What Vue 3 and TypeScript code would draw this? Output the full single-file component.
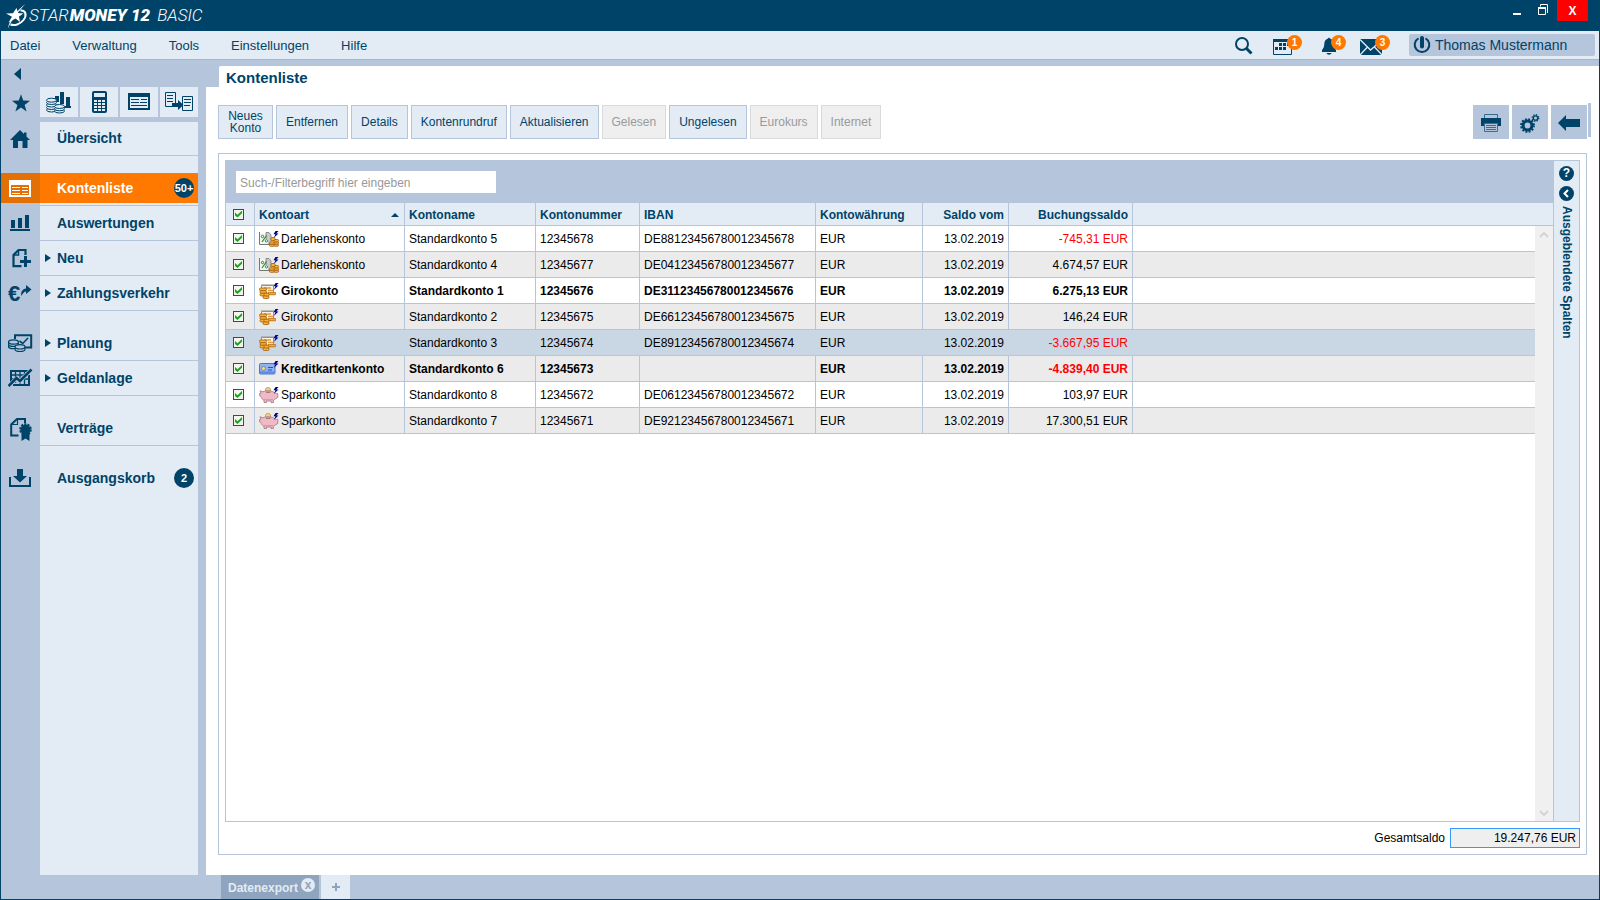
<script setup lang="ts">
import { computed, ref } from 'vue'

interface NavItem {
  id: string
  label: string
  gap?: boolean
  expandable?: boolean
  active?: boolean
  badge?: string
  last?: boolean
}

interface Account {
  type: string
  icon: 'loan' | 'giro' | 'card' | 'savings'
  name: string
  number: string
  iban: string
  currency: string
  date: string
  cents: number
  unread?: boolean
  selected?: boolean
  checked: boolean
}

const menus = ['Datei', 'Verwaltung', 'Tools', 'Einstellungen', 'Hilfe']

const navItems: NavItem[] = [
  { id: 'home', label: 'Übersicht' },
  { id: 'list', label: 'Kontenliste', gap: true, active: true, badge: '50+' },
  { id: 'chart', label: 'Auswertungen' },
  { id: 'new', label: 'Neu', expandable: true },
  { id: 'euro', label: 'Zahlungsverkehr', expandable: true },
  { id: 'plan', label: 'Planung', gap: true, expandable: true },
  { id: 'invest', label: 'Geldanlage', expandable: true },
  { id: 'contract', label: 'Verträge', gap: true },
  { id: 'outbox', label: 'Ausgangskorb', gap: true, badge: '2', last: true },
]

const actions = [
  { label: 'Neues Konto', wrap: true, disabled: false },
  { label: 'Entfernen', wrap: false, disabled: false },
  { label: 'Details', wrap: false, disabled: false },
  { label: 'Kontenrundruf', wrap: false, disabled: false },
  { label: 'Aktualisieren', wrap: false, disabled: false },
  { label: 'Gelesen', wrap: false, disabled: true },
  { label: 'Ungelesen', wrap: false, disabled: false },
  { label: 'Eurokurs', wrap: false, disabled: true },
  { label: 'Internet', wrap: false, disabled: true },
]

const accounts = ref<Account[]>([
  { type: 'Darlehenskonto', icon: 'loan', name: 'Standardkonto 5', number: '12345678', iban: 'DE88123456780012345678', currency: 'EUR', date: '13.02.2019', cents: -74531, checked: true },
  { type: 'Darlehenskonto', icon: 'loan', name: 'Standardkonto 4', number: '12345677', iban: 'DE04123456780012345677', currency: 'EUR', date: '13.02.2019', cents: 467457, checked: true },
  { type: 'Girokonto', icon: 'giro', name: 'Standardkonto 1', number: '12345676', iban: 'DE31123456780012345676', currency: 'EUR', date: '13.02.2019', cents: 627513, unread: true, checked: true },
  { type: 'Girokonto', icon: 'giro', name: 'Standardkonto 2', number: '12345675', iban: 'DE66123456780012345675', currency: 'EUR', date: '13.02.2019', cents: 14624, checked: true },
  { type: 'Girokonto', icon: 'giro', name: 'Standardkonto 3', number: '12345674', iban: 'DE89123456780012345674', currency: 'EUR', date: '13.02.2019', cents: -366795, selected: true, checked: true },
  { type: 'Kreditkartenkonto', icon: 'card', name: 'Standardkonto 6', number: '12345673', iban: '', currency: 'EUR', date: '13.02.2019', cents: -483940, unread: true, checked: true },
  { type: 'Sparkonto', icon: 'savings', name: 'Standardkonto 8', number: '12345672', iban: 'DE06123456780012345672', currency: 'EUR', date: '13.02.2019', cents: 10397, checked: true },
  { type: 'Sparkonto', icon: 'savings', name: 'Standardkonto 7', number: '12345671', iban: 'DE92123456780012345671', currency: 'EUR', date: '13.02.2019', cents: 1730051, checked: true },
])

const filter = ref('')
const total = ref('19.247,76 EUR')

const visible = computed(() => {
  const term = filter.value.trim().toLowerCase()
  return accounts.value.filter((a) => `${a.type} ${a.name} ${a.number} ${a.iban}`.toLowerCase().includes(term))
})

const allChecked = computed({
  get: () => accounts.value.every((a) => a.checked),
  set: (value: boolean) => accounts.value.forEach((a) => (a.checked = value)),
})

function money(cents: number): string {
  const abs = Math.abs(cents)
  const whole = String(Math.floor(abs / 100)).replace(/\B(?=(\d{3})+$)/g, '.')
  return `${cents < 0 ? '-' : ''}${whole},${String(abs % 100).padStart(2, '0')} EUR`
}
</script>

<template>
  <div class="window">
    <header class="titlebar">
      <svg class="mark" width="24" height="26" viewBox="0 0 24 26" aria-hidden="true">
        <path d="M1 10.500 8 10.200 11.500 5 13 10 18.500 10.500 14 13.500 15 19 10.500 15.500 3.500 19.500 7 13.700Z" fill="#fff" />
        <path d="M3 25.500C4 17 12 7 20.500 1 13.500 8.500 7 16 3 25.500Z" fill="#fff" />
        <path d="M15.500 7.500C21 7 22 12.500 18.500 17 15 21.500 9.500 22.800 5.500 21.500" fill="none" stroke="#fff" stroke-width="2" />
      </svg>
      <h1 class="brand"><span class="thin">STAR</span><b>MONEY 12</b> <span class="thin">BASIC</span></h1>
      <div class="controls">
        <button type="button" class="ctl" aria-label="Minimieren">
          <svg width="14" height="14" viewBox="0 0 14 14"><path d="M3 9H11V11H3Z" fill="#fff" /></svg>
        </button>
        <button type="button" class="ctl" aria-label="Wiederherstellen">
          <svg width="14" height="14" viewBox="0 0 14 14"><path d="M4.500 2.500V.5H11.500V9" fill="none" stroke="#fff" /><path d="M2.500 3.500H9.500V10.500H2.500Z" fill="none" stroke="#fff" /><path d="M2 3H10V5H2Z" fill="#fff" /></svg>
        </button>
        <button type="button" class="close" aria-label="Schließen">X</button>
      </div>
    </header>

    <div class="menubar">
      <nav class="menus" aria-label="Hauptmenü">
        <button v-for="m in menus" :key="m" type="button">{{ m }}</button>
      </nav>
      <div class="status">
        <button type="button" class="status-btn" aria-label="Suche">
          <svg width="26" height="20" viewBox="0 0 26 20"><circle cx="10" cy="9" r="6" fill="none" stroke="#004368" stroke-width="2" /><path d="M14.500 13.500 19.500 18.500" stroke="#004368" stroke-width="3" /></svg>
        </button>
        <button type="button" class="status-btn" aria-label="Termine">
          <svg width="26" height="20" viewBox="0 0 26 20"><path d="M1 4H20V7H1Z" fill="#004368" /><path d="M1.500 4V19.500H19.500V4" fill="none" stroke="#004368" /><path d="M7 8h3v3H7zM11 8h3v3h-3zM15 8h3v3h-3zM3 12h3v3H3zM7 12h3v3H7zM11 12h3v3h-3z" fill="#004368" /></svg>
          <span class="count">1</span>
        </button>
        <button type="button" class="status-btn" aria-label="Mitteilungen">
          <svg width="26" height="20" viewBox="0 0 26 20"><path d="M7 3.500C7 2.500 9 2.500 9 3.500 12 4.500 12.500 6.500 12.700 9 12.900 12 13.500 13.500 15 15V17H1V15C2.500 13.500 3.100 12 3.300 9 3.500 6.500 4 4.500 7 3.500Z" fill="#004368" /><path d="M5.500 18H10.500C10 20.300 6 20.300 5.500 18Z" fill="#004368" /></svg>
          <span class="count">4</span>
        </button>
        <button type="button" class="status-btn" aria-label="Nachrichten">
          <svg width="26" height="20" viewBox="0 0 26 20"><path d="M0 4H22V20H0Z" fill="#004368" /><path d="M0 4.500 7.500 12 10.500 15 14 12 22 4.500M0 20 7.500 12M22 20 14.500 12" fill="none" stroke="#e3ebf4" stroke-width="1.300" /></svg>
          <span class="count">3</span>
        </button>
        <button type="button" class="user">
          <svg width="18" height="18" viewBox="0 0 18 18" aria-hidden="true"><path d="M5.500 2.300A7.300 7.300 0 1 0 12.500 2.300" fill="none" stroke="#004368" stroke-width="2" /><path d="M9 2V10.500" stroke="#004368" stroke-width="4" stroke-linecap="round" /></svg>
          <span>Thomas Mustermann</span>
        </button>
      </div>
    </div>

    <div class="workspace">
      <aside class="sidebar">
        <div class="side-top">
          <div class="rail">
            <button type="button" class="collapse" aria-label="Navigation einklappen">
              <svg width="8" height="12" viewBox="0 0 8 12"><path d="M7 0V12L0 6Z" fill="#004368" /></svg>
            </button>
            <button type="button" class="fav" aria-label="Favoriten">
              <svg width="26" height="26" viewBox="0 0 26 26"><path d="M13 4.200 15.200 10.600 22 10.700 16.600 14.900 18.600 21.500 13 17.500 7.400 21.500 9.400 14.900 4 10.700 10.800 10.600Z" fill="#004368" /></svg>
            </button>
          </div>
          <div class="tools">
            <button type="button" aria-label="Finanzübersicht">
              <svg width="38" height="30" viewBox="0 0 38 30">
                <g fill="#004368"><path d="M15 9h4v6h-4zM20 5h4v12h-4zM26 10h4v9h-4zM23 19h8v2h-8z" /></g>
                <g fill="#e3ebf4" stroke="#004368" stroke-width="1">
                  <ellipse cx="11.500" cy="23" rx="5" ry="2" /><ellipse cx="11.500" cy="20.500" rx="5" ry="2" /><ellipse cx="11.500" cy="18" rx="5" ry="2" /><ellipse cx="11.500" cy="15.500" rx="5" ry="2" /><ellipse cx="11.500" cy="13.200" rx="5" ry="2" />
                  <ellipse cx="19.500" cy="24" rx="5" ry="2" /><ellipse cx="19.500" cy="21.800" rx="5" ry="2" /><ellipse cx="19.500" cy="19.500" rx="5" ry="2" />
                </g>
              </svg>
            </button>
            <button type="button" aria-label="Taschenrechner">
              <svg width="38" height="30" viewBox="0 0 38 30"><rect x="12" y="4" width="15" height="22" rx="2" fill="#004368" /><path d="M14 6h11v4H14z" fill="#e3ebf4" /><path d="M14 13h3v2h-3zM18 13h3v2h-3zM22 13h3v2h-3zM14 16h3v2h-3zM18 16h3v2h-3zM22 16h3v2h-3zM14 19h3v2h-3zM18 19h3v2h-3zM22 19h3v2h-3zM14 22h3v2h-3zM18 22h3v2h-3zM22 22h3v2h-3z" fill="#e3ebf4" /></svg>
            </button>
            <button type="button" aria-label="Umsatzliste">
              <svg width="38" height="30" viewBox="0 0 38 30"><path d="M8 6h22v17H8z" fill="#004368" /><path d="M10 10h18v11H10z" fill="#e3ebf4" /><path d="M11 12.500h8M21 12.500h6M11 15.500h8M20 15.500h7M11 18.500h16" stroke="#004368" /></svg>
            </button>
            <button type="button" aria-label="Umbuchung">
              <svg width="38" height="30" viewBox="0 0 38 30"><g fill="none" stroke="#004368"><path d="M5.500 5.500h10v14h-10zM22.500 9.500h10v14h-10z" /><path d="M7 8.500h6M7 11.500h6M7 14.500h6M24 12.500h7M24 15.500h7M24 18.500h6" /></g><path d="M12 16h6v-3l5.500 5-5.500 5v-3h-6z" fill="#004368" /></svg>
            </button>
          </div>
        </div>

        <ul class="nav">
          <li v-for="item in navItems" :key="item.id" :class="{ gap: item.gap }">
            <a href="#" :class="{ active: item.active, last: item.last }">
              <span class="nav-icon">
                <svg width="26" height="26" viewBox="0 0 26 26" aria-hidden="true">
                  <path v-if="item.id === 'home'" d="M12 4 2 14H5V22H10V15H14.500V22H19.500V14H22L18.500 10.500V6.500H16V8Z" fill="#004368" />
                  <g v-else-if="item.id === 'list'"><path d="M1 5H23V22H1ZM3 10V20H21V10Z" fill="#fff" fill-rule="evenodd" /><path d="M4 12.500h8M14 12.500h6M4 15.500h8M14 15.500h6M4 18.500h8M14 18.500h6" stroke="#fff" /></g>
                  <path v-else-if="item.id === 'chart'" d="M3 10h4v8H3zM10 8h4v10h-4zM17 5h4v13h-4zM2 19h20v2H2z" fill="#004368" />
                  <g v-else-if="item.id === 'new'" fill="none" stroke="#004368"><path d="M17.500 10V5H10.500L5.500 10V21.200H13.500" stroke-width="2.200" /><path d="M10.500 5V10H5.500" stroke-width="1.500" /><path d="M17.500 11V22M12 16.500H23" stroke-width="3" /></g>
                  <g v-else-if="item.id === 'euro'" fill="#004368"><text x="0" y="21" class="euro">€</text><path d="M13 16C13 10.500 15 9 18 8.500V5L23.500 9.500 18 14V11.500C16 11.500 15.500 13 13 16Z" /></g>
                  <g v-else-if="item.id === 'plan'" stroke="#004368" fill="none">
                    <path d="M7 9V5.200H23.200V17.500H17" stroke-width="2" /><path d="M11.500 11 14.700 13.500 20 8" stroke-width="1.600" />
                    <g fill="#b5c5db" stroke-width="1.200"><ellipse cx="5.500" cy="16.500" rx="5" ry="2.200" /><ellipse cx="5.500" cy="14.200" rx="5" ry="2.200" /><ellipse cx="5.500" cy="12" rx="5" ry="2.200" /><ellipse cx="12" cy="19.300" rx="5" ry="2.200" /><ellipse cx="12" cy="16.800" rx="5" ry="2.200" /></g>
                  </g>
                  <g v-else-if="item.id === 'invest'" stroke="#004368" fill="none"><path d="M3 18V6H20M21 10V20H5" stroke-width="2" /><path d="M3 10h16M3 14h18M7.500 6v12M12 6v14M16.500 6v14" stroke-width="1.300" /><path d="M1 20.500 9 13 12 16 23.500 4.500" stroke="#b5c5db" stroke-width="4" /><path d="M.5 21 8.500 13 12 16 23.500 4.500" stroke-width="2.600" /></g>
                  <g v-else-if="item.id === 'contract'"><path d="M17 8V4H9L3.200 9.500V20.500H10.500" fill="none" stroke="#004368" stroke-width="2" /><path d="M9.500 4V9.500H3" fill="none" stroke="#004368" stroke-width="1.200" /><circle cx="17.500" cy="14.500" r="5" fill="#004368" /><circle cx="17.500" cy="14.500" r="5.300" fill="none" stroke="#004368" stroke-width="2" stroke-dasharray="2.100 1.200" /><path d="M13.500 17V26L17.500 23.500 21.500 26V17Z" fill="#004368" /></g>
                  <g v-else><path d="M9 4H15V11H19L12 17.500 5 11H9Z" fill="#004368" /><path d="M2 12V21H22V12" fill="none" stroke="#004368" stroke-width="2" /></g>
                </svg>
              </span>
              <span class="nav-label">
                <i class="tri" :class="{ on: item.expandable }"></i>
                {{ item.label }}
                <span v-if="item.badge" class="badge">{{ item.badge }}</span>
              </span>
            </a>
          </li>
        </ul>
      </aside>

      <main class="content">
        <h2 class="page-title">Kontenliste</h2>
        <div class="page">
          <div class="toolbar">
            <button v-for="a in actions" :key="a.label" type="button" class="action" :class="{ wrap: a.wrap }" :disabled="a.disabled">{{ a.label }}</button>
            <div class="page-tools">
              <button type="button" aria-label="Drucken">
                <svg width="36" height="34" viewBox="0 0 36 34"><path d="M11.500 14V9.500H24.500V14" fill="none" stroke="#004368" stroke-opacity=".7" /><path d="M8 13H28V21H8Z" fill="#004368" /><path d="M11.500 18.500H24.500V26.500H11.500Z" fill="#b5c5db" stroke="#3c6f8f" /><path d="M13 20.500H23M13 22.500H23M13 24.500H23" stroke="#3c6f8f" /></svg>
              </button>
              <button type="button" aria-label="Einstellungen der Liste">
                <svg width="36" height="34" viewBox="0 0 36 34" fill="none" stroke="#004368"><circle cx="15.500" cy="20.500" r="4.400" stroke-width="3" /><circle cx="15.500" cy="20.500" r="6.400" stroke-width="2" stroke-dasharray="1.900 1.450" /><circle cx="23.500" cy="13" r="2.200" stroke-width="1.300" /><circle cx="23.500" cy="13" r="3.200" stroke-width="1.400" stroke-dasharray="1.300 1.213" /></svg>
              </button>
              <button type="button" aria-label="Zurück">
                <svg width="36" height="34" viewBox="0 0 36 34"><path d="M7 18 15 10V14H29V22H15V26Z" fill="#004368" /></svg>
              </button>
            </div>
          </div>

          <section class="frame">
            <div class="grid">
              <div class="grid-main">
                <div class="filter">
                  <input v-model="filter" type="text" aria-label="Filter" placeholder="Such-/Filterbegriff hier eingeben" />
                </div>
                <div class="rows">
                  <table>
                    <colgroup>
                      <col class="c-check" /><col class="c-type" /><col class="c-name" /><col class="c-number" /><col class="c-iban" /><col class="c-currency" /><col class="c-date" /><col class="c-amount" /><col />
                    </colgroup>
                    <thead>
                      <tr>
                        <th class="check"><input v-model="allChecked" type="checkbox" aria-label="Alle auswählen" /></th>
                        <th aria-sort="ascending"><span class="sorted">Kontoart<i></i></span></th>
                        <th>Kontoname</th>
                        <th>Kontonummer</th>
                        <th>IBAN</th>
                        <th>Kontowährung</th>
                        <th class="right">Saldo vom</th>
                        <th class="right">Buchungssaldo</th>
                        <td></td>
                      </tr>
                    </thead>
                    <tbody>
                      <tr v-for="a in visible" :key="a.number" :class="{ unread: a.unread, selected: a.selected }">
                        <td class="check"><input v-model="a.checked" type="checkbox" :aria-label="a.name" /></td>
                        <td>
                          <span class="type">
                            <svg width="20" height="16" viewBox="0 0 20 16" aria-hidden="true">
                              <g v-if="a.icon === 'loan'">
                                <path d="M.5 1V13.500H13" fill="none" stroke="#777" /><path d="M7 1.500H10L12 4V13H7Z" fill="#c9c9c9" stroke="#777" stroke-width=".8" /><path d="M1 2H6V8H9V13H1Z" fill="#f4f6f2" />
                                <path d="M7.500 4.500 3 11" stroke="#2c8a3a" stroke-width="1.200" /><circle cx="3.500" cy="5.500" r="1.200" fill="none" stroke="#2c8a3a" /><circle cx="7.500" cy="9.800" r="1.200" fill="none" stroke="#2c8a3a" />
                                <g fill="#f7b63a" stroke="#a35a08" stroke-width=".8"><rect x="10.500" y="13" width="5" height="2.300" rx="1" /><rect x="10.500" y="10.800" width="5" height="2.300" rx="1" /><rect x="15" y="13" width="4.500" height="2.300" rx="1" /><rect x="15" y="10.800" width="4.500" height="2.300" rx="1" /><rect x="15" y="8.500" width="4.500" height="2.300" rx="1" /><rect x="12" y="6.500" width="4" height="3" rx="1" /></g>
                              </g>
                              <g v-else-if="a.icon === 'giro'">
                                <path d="M2.500 2.500H14.500V11.500H2.500Z" fill="#fdf3e2" stroke="#c9862e" /><path d="M2 1.800H15" stroke="#999" stroke-width=".8" /><path d="M5 5H12M9 7.500H14" stroke="#e59a35" stroke-width="1.300" /><path d="M9 9.500H16.500V11.800H9Z" fill="#f5a93c" stroke="#b5690e" stroke-width=".7" />
                                <g fill="#f7b63a" stroke="#a35a08" stroke-width=".8"><rect x=".5" y="5" width="7" height="2.700" rx="1.200" /><rect x="1" y="7.700" width="6.500" height="2.600" rx="1.200" /><rect x="1" y="10.300" width="6.500" height="2.600" rx="1.200" /><rect x="4" y="12.800" width="6" height="2.700" rx="1.200" /><rect x="5" y="10.300" width="5" height="2.600" rx="1.200" /></g>
                              </g>
                              <g v-else-if="a.icon === 'card'">
                                <rect x=".5" y="2.500" width="15.500" height="10.500" rx="1" fill="#8fb2f5" stroke="#4a74d0" /><path d="M1 10.500H15.500V12.500H1Z" fill="#5b86e6" /><circle cx="4.500" cy="7.500" r="2" fill="#f1dc8f" stroke="#6f7a50" stroke-width=".7" /><path d="M9 6.500H14M9 9H13" stroke="#2a4fb0" />
                              </g>
                              <g v-else>
                                <circle cx="9" cy="3" r="2.600" fill="#f2d27a" stroke="#b39034" stroke-width=".7" /><path d="M1 3.800 4 4.800C6 3.300 12 3.300 14.500 5 16 6 16.500 6.500 18.800 6.500V10.500L16 12 14.500 13.500V15.500H12V14H7.500V15.500H5V13.300C3 12.300 2.300 11 2 9.600L.6 8.800V6.500L2 6.200Z" fill="#efb9c5" stroke="#a27682" stroke-width=".8" /><path d="M5 12.800H14" stroke="#cf8c9d" /><path d="M7 5.200H11.500" stroke="#8a5f68" />
                              </g>
                              <path d="M16.500 0 14.500 3.200H16.500L14.800 7 19.500 2.500H17.300L19.500 0Z" fill="#000080" />
                            </svg>
                            {{ a.type }}
                          </span>
                        </td>
                        <td>{{ a.name }}</td>
                        <td>{{ a.number }}</td>
                        <td>{{ a.iban }}</td>
                        <td>{{ a.currency }}</td>
                        <td class="right">{{ a.date }}</td>
                        <td class="right" :class="{ negative: a.cents < 0 }">{{ money(a.cents) }}</td>
                        <td></td>
                      </tr>
                    </tbody>
                  </table>
                  <div class="scrollbar" aria-hidden="true">
                    <svg width="10" height="8" viewBox="0 0 10 8"><path d="M1 6 5 2 9 6" fill="none" stroke="#d4d4d4" stroke-width="2" /></svg>
                    <svg width="10" height="8" viewBox="0 0 10 8"><path d="M1 2 5 6 9 2" fill="none" stroke="#d4d4d4" stroke-width="2" /></svg>
                  </div>
                </div>
              </div>
              <div class="hidden-cols">
                <button type="button" aria-label="Hilfe" class="round">?</button>
                <button type="button" aria-label="Spalten einblenden" class="round">
                  <svg width="15" height="15" viewBox="0 0 15 15"><path d="M9 4 5.500 7.500 9 11" fill="none" stroke="#fff" stroke-width="2" /></svg>
                </button>
                <span class="vertical">Ausgeblendete Spalten</span>
              </div>
            </div>
            <div class="total">
              <label for="total">Gesamtsaldo</label>
              <input id="total" v-model="total" type="text" readonly />
            </div>
          </section>
        </div>
      </main>
    </div>

    <footer class="tabs">
      <div class="tab">
        <a href="#">Datenexport</a>
        <button type="button" aria-label="Tab schließen">x</button>
      </div>
      <button type="button" class="add" aria-label="Neuer Tab">
        <svg width="10" height="10" viewBox="0 0 10 10"><path d="M5 1V9M1 5H9" stroke="#8ea3bd" stroke-width="2" /></svg>
      </button>
    </footer>
  </div>
</template>

<style>
html,
body {
  margin: 0;
  background: #b5c5db;
}
</style>

<style scoped>
* {
  box-sizing: border-box;
}
.window {
  display: flex;
  flex-direction: column;
  height: 100vh;
  border: 1px solid #004368;
  border-top: 0;
  background: #b5c5db;
  color: #004368;
  font-family: "Liberation Sans", Arial, sans-serif;
  font-size: 12px;
}
button {
  margin: 0;
  padding: 0;
  border: 0;
  background: none;
  color: inherit;
  font: inherit;
}
a {
  color: inherit;
  text-decoration: none;
}
svg {
  display: block;
}

/* Title bar */
.titlebar {
  display: flex;
  align-items: center;
  flex: none;
  height: 31px;
  padding-left: 4px;
  background: #004368;
  color: #fff;
}
.brand {
  margin: 0;
  font: italic 17px/31px Roboto, "Liberation Sans", sans-serif;
  white-space: pre;
}
.thin {
  font-weight: 300;
}
.brand b {
  margin: 0 3px 0 1px;
  font-weight: 900;
}
.controls {
  display: flex;
  align-self: flex-start;
  align-items: center;
  margin-left: auto;
  padding-right: 11px;
}
.ctl {
  margin-right: 12px;
}
.ctl + .ctl {
  margin-right: 7px;
}
.close {
  width: 31px;
  height: 21px;
  background: #f00;
  font-weight: bold;
}

/* Menu bar */
.menubar {
  display: flex;
  justify-content: space-between;
  align-items: center;
  flex: none;
  height: 29px;
  padding: 0 4px 0 9px;
  border-bottom: 1px solid #a5b8d0;
  background: #e3ebf4;
}
.menus {
  display: flex;
  gap: 32px;
  font-size: 13px;
}
.status {
  display: flex;
  align-items: center;
}
.status-btn {
  position: relative;
  width: 26px;
  margin-right: 14px;
}
.status-btn:nth-child(2),
.status-btn:nth-child(4) {
  margin-right: 23px;
}
.status-btn:nth-child(3) {
  margin-right: 13px;
}
.count {
  position: absolute;
  top: 0;
  left: 15px;
  width: 15px;
  height: 15px;
  border-radius: 50%;
  background: #ff7800;
  color: #fff;
  font: bold 10px/15px "Liberation Sans", Arial, sans-serif;
}
.status-btn:nth-child(3) .count {
  left: 10px;
}
.user {
  display: flex;
  align-items: center;
  gap: 4px;
  width: 186px;
  height: 22px;
  padding-left: 4px;
  border-radius: 2px;
  background: #b5c5db;
  font-size: 14px;
}

/* Sidebar */
.workspace {
  display: flex;
  flex: 1;
  min-height: 0;
}
.sidebar {
  display: flex;
  flex-direction: column;
  flex: none;
  width: 205px;
  padding-right: 8px;
}
.side-top {
  display: flex;
  height: 62px;
}
.rail {
  width: 39px;
}
.collapse,
.fav {
  display: block;
  height: 28px;
  padding-left: 13px;
}
.fav {
  padding-left: 7px;
  height: 30px;
}
.tools {
  display: flex;
  gap: 2px;
  align-items: flex-end;
  padding-bottom: 5px;
}
.tools button {
  background: #e3ebf4;
}
.nav {
  flex: 1;
  margin: 0;
  padding: 0;
  list-style: none;
  background: linear-gradient(to right, transparent 39px, #e3ebf4 39px);
  font-size: 14px;
  font-weight: bold;
}
.nav li.gap {
  padding-top: 15px;
}
.nav a {
  display: flex;
  height: 35px;
}
.nav li:first-child a {
  height: 34px;
}
.nav li:first-child .nav-icon,
.nav li:first-child .nav-label {
  padding-bottom: 1px;
}
.nav-icon {
  display: flex;
  align-items: center;
  width: 39px;
  padding: 0 0 1px 7px;
}
.nav-label {
  display: flex;
  align-items: center;
  flex: 1;
  padding: 0 4px 0 5px;
  border-bottom: 1px solid #b5c5db;
}
.nav a.last .nav-label {
  border-bottom-color: transparent;
}
.nav a.active {
  padding: 2px 0;
  border-bottom: 1px solid #b5c5db;
  color: #fff;
}
.nav a.active .nav-icon {
  padding-bottom: 0;
  background: #e37006;
}
.nav a.active .nav-label {
  border: 0;
  background: #ff7800;
}
.tri {
  width: 12px;
}
.tri.on::before {
  content: "";
  display: block;
  width: 6px;
  height: 8px;
  background: #004368;
  clip-path: polygon(0 0, 100% 50%, 0 100%);
}
.badge {
  width: 20px;
  height: 20px;
  margin-left: auto;
  border-radius: 50%;
  background: #004368;
  color: #fff;
  font-size: 11px;
  line-height: 20px;
  text-align: center;
  white-space: nowrap;
}
.euro {
  font: bold 22px "Liberation Sans", Arial, sans-serif;
}

/* Content */
.content {
  display: flex;
  flex-direction: column;
  flex: 1;
  min-width: 0;
  padding-top: 6px;
}
.page-title {
  margin: 0 0 0 13px;
  padding-left: 7px;
  background: #fff;
  font-size: 15px;
  line-height: 21px;
  height: 21px;
  padding-top: 1px;
  border-top-left-radius: 2px;
}
.page {
  display: flex;
  flex-direction: column;
  flex: 1;
  min-height: 0;
  padding: 18px 12px 20px;
  background: #fff;
}
.toolbar {
  position: relative;
  display: flex;
  gap: 3px;
}
.toolbar::after {
  content: "";
  position: absolute;
  top: -2px;
  right: -4px;
  width: 3px;
  height: 34px;
  background: #b5c5db;
}
.action {
  height: 34px;
  padding: 0 9px;
  border: 1px solid #b5c5db;
  background: #e3ebf4;
  line-height: 12px;
  white-space: nowrap;
}
.action.wrap {
  width: 55px;
  white-space: normal;
}
.action:disabled {
  border-color: #dadada;
  background: #efefef;
  color: #9a9a9a;
}
.page-tools {
  display: flex;
  gap: 3px;
  margin-left: auto;
}
.page-tools button {
  background: #b5c5db;
}
.frame {
  display: flex;
  flex-direction: column;
  flex: 1;
  min-height: 0;
  margin-top: 14px;
  padding: 6px;
  border: 1px solid #b5c5db;
}
.grid {
  display: flex;
  flex: 1;
  min-height: 0;
  border: 1px solid #b5c5db;
}
.grid-main {
  display: flex;
  flex-direction: column;
  flex: 1;
  min-width: 0;
}
.filter {
  flex: none;
  height: 42px;
  padding: 10px;
  background: #b5c5db;
}
.filter input {
  display: block;
  width: 260px;
  height: 22px;
  padding: 2px 4px 0;
  border: 0;
  font: 12px "Liberation Sans", Arial, sans-serif;
}
.filter input::placeholder {
  color: #999;
}
.rows {
  position: relative;
  flex: 1;
  min-height: 0;
  background: #fff;
}
table {
  width: 100%;
  table-layout: fixed;
  border-collapse: separate;
  border-spacing: 0;
}
.c-check { width: 29px; }
.c-type { width: 150px; }
.c-name { width: 131px; }
.c-number { width: 104px; }
.c-iban { width: 176px; }
.c-currency { width: 107px; }
.c-date { width: 86px; }
.c-amount { width: 124px; }
th,
td {
  height: 26px;
  padding: 0 4px;
  border-right: 1px solid #b5c5db;
  border-bottom: 1px solid #b5c5db;
  text-align: left;
  white-space: nowrap;
}
thead th,
thead td {
  height: 23px;
  padding-top: 2px;
  background: #e3ebf4;
}
tr > :last-child {
  border-right: 0;
}
tbody {
  color: #000;
}
tbody tr:nth-child(even) {
  background: #ebebeb;
}
tbody tr.unread {
  font-weight: bold;
}
tbody tr.selected {
  background: #c9d6e3;
}
tr.selected td {
  border-right-color: transparent;
}
.right {
  text-align: right;
}
.negative {
  color: #f00;
}
tr > .check {
  padding: 0 0 0 7px;
}
.check input {
  display: block;
  width: 11px;
  height: 11px;
  margin: 0;
  appearance: none;
  border: 1px solid #1c5180;
  background: #f4f4f1;
}
.check input:checked::before {
  content: "";
  display: block;
  width: 7px;
  height: 7px;
  margin: 1px;
  background: #21a121;
  clip-path: polygon(0 30%, 36% 60%, 100% 0, 100% 40%, 36% 100%, 0 70%);
}
.sorted {
  display: flex;
  justify-content: space-between;
  align-items: center;
}
.sorted i {
  width: 8px;
  height: 4px;
  margin-right: 1px;
  background: #004368;
  clip-path: polygon(50% 0, 100% 100%, 0 100%);
}
.type {
  display: flex;
  align-items: center;
  gap: 2px;
}
.scrollbar {
  position: absolute;
  top: 23px;
  right: 0;
  bottom: 0;
  display: flex;
  flex-direction: column;
  justify-content: space-between;
  align-items: center;
  width: 18px;
  padding: 5px 0 4px;
  background: #f0f0f0;
}
.hidden-cols {
  display: flex;
  flex-direction: column;
  align-items: center;
  gap: 5px;
  flex: none;
  width: 26px;
  padding-top: 5px;
  border-left: 1px solid #b5c5db;
  background: #e3ebf4;
}
.round {
  width: 15px;
  height: 15px;
  border-radius: 50%;
  background: #004368;
  color: #fff;
  font-weight: bold;
  line-height: 15px;
}
.vertical {
  font-weight: bold;
  writing-mode: vertical-rl;
  white-space: nowrap;
}
.total {
  display: flex;
  justify-content: flex-end;
  align-items: center;
  gap: 5px;
  margin-top: 6px;
  color: #000;
}
.total input {
  width: 130px;
  height: 20px;
  padding: 0 3px;
  border: 1px solid #3399ff;
  background: #efefef;
  font: 12px "Liberation Sans", Arial, sans-serif;
  text-align: right;
}

/* Bottom tabs */
.tabs {
  display: flex;
  gap: 2px;
  flex: none;
  height: 24px;
  padding-left: 220px;
  font-weight: bold;
}
.tab {
  display: flex;
  align-items: center;
  gap: 3px;
  padding: 0 4px 0 7px;
  background: #8fa4be;
  color: #e3ebf4;
}
.tab a {
  padding-top: 2px;
}
.tab button {
  width: 14px;
  height: 14px;
  margin-bottom: 4px;
  border-radius: 50%;
  background: #e3ebf4;
  color: #8fa4be;
  line-height: 12px;
}
.add {
  display: flex;
  justify-content: center;
  align-items: center;
  width: 29px;
  background: #e3ebf4;
}
</style>
